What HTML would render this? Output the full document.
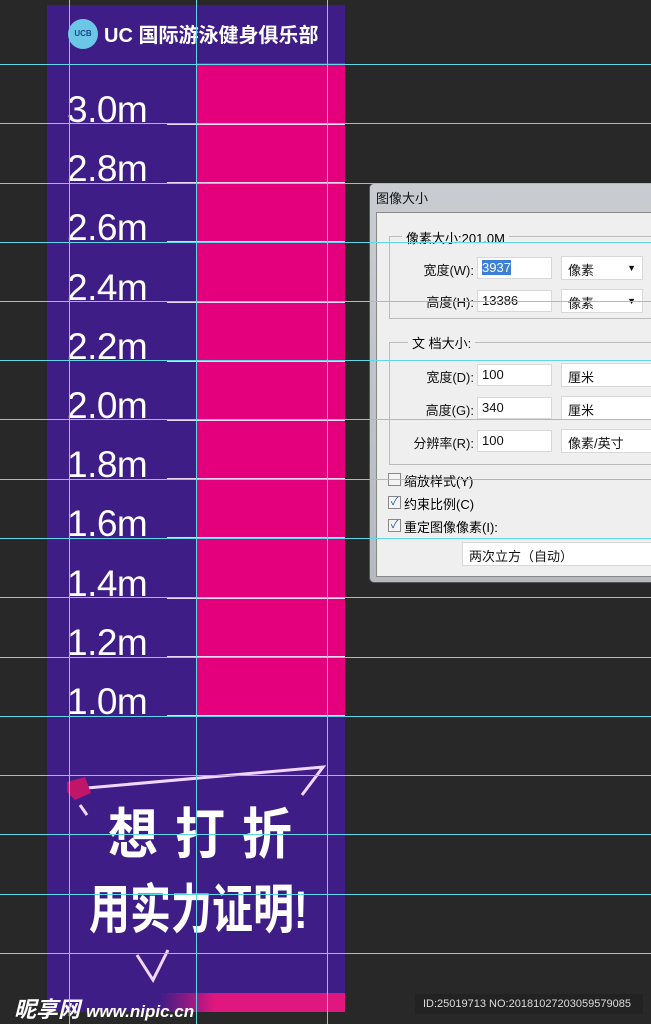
<!DOCTYPE html>
<html><head><meta charset="utf-8"><style>
*{margin:0;padding:0;box-sizing:border-box}
body{width:651px;height:1024px;background:#282828;position:relative;overflow:hidden;font-family:"Liberation Sans","Noto Sans CJK SC",sans-serif}
.a{position:absolute}
.lab{position:absolute;left:67px;color:#fff;font-size:37px;line-height:35px;letter-spacing:-0.5px}
.wl{position:absolute;left:167px;width:178px;height:2px;background:#e8d8f0}
.gh{position:absolute;left:0;width:651px;height:1px;background:#5fd9e8}
.gv{position:absolute;top:0;height:1024px;width:1px;background:#5fd9e8}
.dl{position:absolute;font-size:13px;color:#111;text-align:right}
.inp{position:absolute;background:#fff;border:1px solid #d8d8d8;font-size:13px;padding:2px 4px;color:#111;height:22px}
.sel{position:absolute;background:#fff;border:1px solid #d8d8d8;font-size:13px;padding:3px 6px;color:#111;height:24px}
.cb{position:absolute;left:388px;width:13px;height:13px;border:1px solid #888;background:#f4f4f4;font-size:11px;line-height:11px;color:#2a5aa0;text-align:center}
</style></head><body>
<div class="a" style="left:47px;top:5px;width:298px;height:1007px;background:#3f1d86"></div>
<div class="a" style="left:196px;top:63px;width:149px;height:653px;background:#e4007c"></div>
<div class="a" style="left:68px;top:19px;width:30px;height:30px;border-radius:50%;background:#6cc7e6;color:#1a4b8a;font-size:8px;font-weight:bold;text-align:center;line-height:30px">UCB</div>
<div class="a" style="left:104px;top:21px;color:#fff;font-size:20px;font-weight:bold;line-height:30px;white-space:nowrap">UC 国际游泳健身俱乐部</div>

<div class="lab" style="top:92px">3.0m</div>
<div class="lab" style="top:151px">2.8m</div>
<div class="lab" style="top:210px">2.6m</div>
<div class="lab" style="top:270px">2.4m</div>
<div class="lab" style="top:329px">2.2m</div>
<div class="lab" style="top:388px">2.0m</div>
<div class="lab" style="top:447px">1.8m</div>
<div class="lab" style="top:506px">1.6m</div>
<div class="lab" style="top:566px">1.4m</div>
<div class="lab" style="top:625px">1.2m</div>
<div class="lab" style="top:684px">1.0m</div>
<div class="wl" style="top:123px"></div><div class="wl" style="top:182px"></div><div class="wl" style="top:241px"></div><div class="wl" style="top:301px"></div><div class="wl" style="top:360px"></div><div class="wl" style="top:419px"></div><div class="wl" style="top:478px"></div><div class="wl" style="top:537px"></div><div class="wl" style="top:597px"></div><div class="wl" style="top:656px"></div><div class="wl" style="top:715px"></div>

<svg class="a" style="left:47px;top:760px" width="298" height="230">
<path d="M40 28 L276 7 L255 35" stroke="#f3d6ff" stroke-width="3" fill="none"/>
<path d="M33 45 L40 55" stroke="#f3d6ff" stroke-width="3"/>
<path d="M20 22 L38 17 L44 33 L28 40 L20 32Z" fill="#c0166a"/>
<path d="M90 195 L106 220 L121 190" stroke="#f3d6ff" stroke-width="3" fill="none"/>
</svg>
<div class="a" style="left:108px;top:803px;color:#fff;font-size:50px;font-weight:bold;letter-spacing:17px;line-height:64px;white-space:nowrap;transform:scaleY(1.1)">想打折</div>
<div class="a" style="left:89px;top:881px;color:#fff;font-size:41px;font-weight:bold;line-height:44px;white-space:nowrap;transform:scaleY(1.3);transform-origin:top left">用实力证明!</div>
<div class="a" style="left:160px;top:993px;width:185px;height:19px;background:linear-gradient(90deg,#3f1d86,#e0177e 30%)"></div>
<div class="a" style="left:14px;top:992px;color:#fff;font-size:22px;font-weight:bold;font-style:italic;white-space:nowrap">昵享网 <span style="font-size:17px">www.nipic.cn</span></div>
<div class="a" style="left:415px;top:994px;width:228px;height:20px;background:#222;color:#ddd;font-size:11px;line-height:20px;padding-left:8px;white-space:nowrap">ID:25019713 NO:20181027203059579085</div>

<div class="a" style="left:369px;top:183px;width:290px;height:400px;background:linear-gradient(#c9cdd2,#b5bac0);border:1px solid #555;border-radius:5px"></div>
<div class="a" style="left:376px;top:188px;font-size:13px;color:#111">图像大小</div>
<div class="a" style="left:376px;top:212px;width:280px;height:365px;background:#efefef;border:1px solid #888"></div>
<div class="a" style="left:389px;top:236px;width:270px;height:83px;border:1px solid #bbb"></div>
<div class="a" style="left:402px;top:228px;background:#efefef;padding:0 4px;font-size:13px">像素大小:201.0M</div>
<div class="a" style="left:389px;top:342px;width:270px;height:123px;border:1px solid #bbb"></div>
<div class="a" style="left:408px;top:333px;background:#efefef;padding:0 4px;font-size:13px">文 档大小:</div>
<div class="dl" style="left:380px;width:94px;top:260px">宽度(W):</div>
<div class="dl" style="left:380px;width:94px;top:292px">高度(H):</div>
<div class="dl" style="left:380px;width:94px;top:367px">宽度(D):</div>
<div class="dl" style="left:380px;width:94px;top:400px">高度(G):</div>
<div class="dl" style="left:380px;width:94px;top:433px">分辨率(R):</div>
<div class="inp" style="left:477px;top:257px;width:75px"><span style="background:#3b7fd6;color:#fff">3937</span></div>
<div class="inp" style="left:477px;top:290px;width:75px">13386</div>
<div class="inp" style="left:477px;top:364px;width:75px">100</div>
<div class="inp" style="left:477px;top:397px;width:75px">340</div>
<div class="inp" style="left:477px;top:430px;width:75px">100</div>
<div class="sel" style="left:561px;top:256px;width:82px">像素 <span style="float:right;font-size:9px;margin-top:3px">▼</span></div>
<div class="sel" style="left:561px;top:289px;width:82px">像素 <span style="float:right;font-size:9px;margin-top:3px">▼</span></div>
<div class="sel" style="left:561px;top:363px;width:95px">厘米</div>
<div class="sel" style="left:561px;top:396px;width:95px">厘米</div>
<div class="sel" style="left:561px;top:429px;width:95px">像素/英寸</div>
<div class="cb" style="top:473px"></div><div class="a" style="left:404px;top:471px;font-size:13px">缩放样式(Y)</div>
<div class="cb" style="top:496px">✓</div><div class="a" style="left:404px;top:494px;font-size:13px">约束比例(C)</div>
<div class="cb" style="top:519px">✓</div><div class="a" style="left:404px;top:517px;font-size:13px">重定图像像素(I):</div>
<div class="sel" style="left:462px;top:542px;width:194px">两次立方（自动）</div>

<div class="gh" style="top:64px"></div><div class="gh" style="top:123px"></div><div class="gh" style="top:183px"></div><div class="gh" style="top:242px"></div><div class="gh" style="top:301px"></div><div class="gh" style="top:360px"></div><div class="gh" style="top:419px"></div><div class="gh" style="top:479px"></div><div class="gh" style="top:538px"></div><div class="gh" style="top:597px"></div><div class="gh" style="top:657px"></div><div class="gh" style="top:716px"></div><div class="gh" style="top:775px"></div><div class="gh" style="top:834px"></div><div class="gh" style="top:894px"></div><div class="gh" style="top:953px"></div>
<div class="gv" style="left:69px"></div><div class="gv" style="left:196px"></div><div class="gv" style="left:327px"></div>
</body></html>
